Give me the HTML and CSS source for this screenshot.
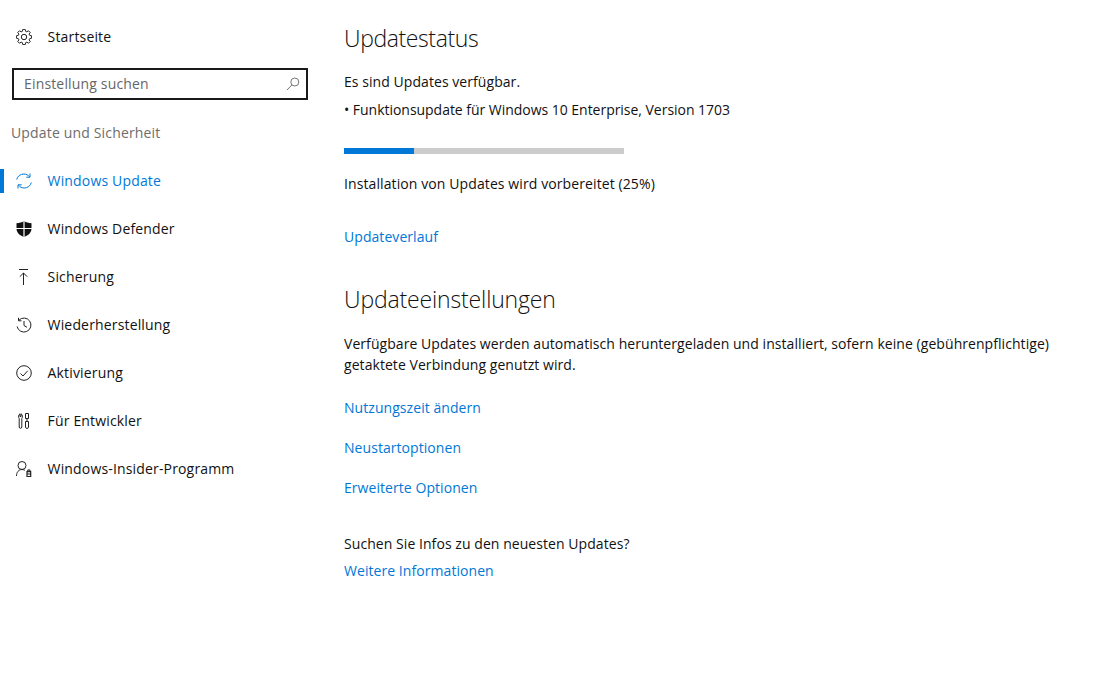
FILE: index.html
```html
<!DOCTYPE html>
<html lang="de">
<head>
    <meta charset="UTF-8">
    <meta name="viewport" content="width=device-width, initial-scale=1.0">
    <title>Windows Update</title>
    <link rel="stylesheet" href="styles.css">
</head>
<body>

    <div class="sidebar">
        <a class="nav-item home-item">
            <svg class="nav-icon" viewBox="0 0 16 16" fill="none" stroke="#222" stroke-width="1"><polygon points="13.67,6.37 15.61,6.8 15.61,9.2 13.67,9.63 13.16,10.86 14.23,12.53 12.53,14.23 10.86,13.16 9.63,13.67 9.2,15.61 6.8,15.61 6.37,13.67 5.14,13.16 3.47,14.23 1.77,12.53 2.84,10.86 2.33,9.63 .39,9.2 .39,6.8 2.33,6.37 2.84,5.14 1.77,3.47 3.47,1.77 5.14,2.84 6.37,2.33 6.8,.39 9.2,.39 9.63,2.33 10.86,2.84 12.53,1.77 14.23,3.47 13.16,5.14"/><circle cx="8" cy="8" r="2.700"/></svg>
            <span>Startseite</span>
        </a>

        <div class="search-box">
            <span class="search-text">Einstellung suchen</span>
            <svg class="search-icon" viewBox="0 0 14 14" fill="none" stroke="#767676" stroke-width="1"><circle cx="8.800" cy="5" r="4"/><path d="M5.900 7.900 1 13"/></svg>
        </div>

        <div class="section-title">Update und Sicherheit</div>

        <a class="nav-item active">
            <svg class="nav-icon" viewBox="0 0 16 16" fill="none" stroke="#0078d7" stroke-width="1"><path d="M.7 6.500C1.400 3.300 4.300 1 7.800 1c2.300 0 4.400 1 5.700 2.800M14 .5v3.700h-3.700"/><path d="M15.300 9.500c-.7 3.200-3.600 5.500-7.100 5.500-2.300 0-4.400-1-5.700-2.800M2 15.500v-3.700h3.700"/></svg>
            <span>Windows Update</span>
        </a>
        <a class="nav-item">
            <svg class="nav-icon" viewBox="0 0 16 16"><path fill="#111" d="M8 0c2 1.400 4.500 2.200 7.500 2.200v5.300C15.500 11.500 12.500 14.500 8 16 3.500 14.500.5 11.500.5 7.500V2.200C3.500 2.200 6 1.400 8 0z"/><path stroke="#fff" stroke-width="1.200" d="M8 0v16M0 7.500h16"/></svg>
            <span>Windows Defender</span>
        </a>
        <a class="nav-item">
            <svg class="nav-icon" viewBox="0 0 16 16" fill="none" stroke="#222" stroke-width="1"><path d="M3 .5h9M7.500 16V4M3.800 7.700 7.500 4l3.700 3.700"/></svg>
            <span>Sicherung</span>
        </a>
        <a class="nav-item">
            <svg class="nav-icon" viewBox="0 0 16 16" fill="none" stroke="#222" stroke-width="1"><path d="M2.900 3.200A7 7 0 1 1 1.100 9.500M2.500 .8v3h3M8 4v4.500l3 1.800"/></svg>
            <span>Wiederherstellung</span>
        </a>
        <a class="nav-item">
            <svg class="nav-icon" viewBox="0 0 16 16" fill="none" stroke="#222" stroke-width="1"><circle cx="8" cy="8" r="7.300"/><path d="M4.500 8.500 7 11l4.700-5.200"/></svg>
            <span>Aktivierung</span>
        </a>
        <a class="nav-item">
            <svg class="nav-icon" viewBox="0 0 16 16" fill="none" stroke="#222" stroke-width="1"><path d="M4 .8v2.700h1V.8C6.700 1.500 6.700 4.500 5.800 5.500v8.500c0 1.800-2.600 1.800-2.600 0V5.500C2.300 4.500 2.300 1.500 4 .8zM9.500 .5h3v5h-3zM11 5.500v3M9.500 8.500h3v5.700c0 1.600-3 1.600-3 0z"/></svg>
            <span>Für Entwickler</span>
        </a>
        <a class="nav-item">
            <svg class="nav-icon" viewBox="0 0 16 16" fill="none" stroke="#222" stroke-width="1"><circle cx="6" cy="4.500" r="4"/><path d="M.5 15c0-3.800 2.200-6.500 5.500-6.500 1 0 2 .3 2.800.8"/><path stroke-width="1.200" d="M11.700 10.500v-.7c0-1.400 2.300-1.400 2.300 0v.7M11 10.700h3.700v4.800H11zM11 13h3.700"/></svg>
            <span>Windows-Insider-Programm</span>
        </a>
    </div>

    <div class="content">
        <h2 class="first-heading">Updatestatus</h2>
        <p class="status-line">Es sind Updates verfügbar.</p>
        <p class="update-line">• Funktionsupdate für Windows 10 Enterprise, Version 1703</p>

        <div class="progress">
            <div class="progress-fill" style="width: 25%"></div>
        </div>

        <p class="progress-text">Installation von Updates wird vorbereitet (25%)</p>
        <a class="link history-link">Updateverlauf</a>

        <h2 class="second-heading">Updateeinstellungen</h2>
        <p class="description">Verfügbare Updates werden automatisch heruntergeladen und installiert, sofern keine (gebührenpflichtige) getaktete Verbindung genutzt wird.</p>

        <a class="link option-link">Nutzungszeit ändern</a>
        <a class="link option-link">Neustartoptionen</a>
        <a class="link option-link">Erweiterte Optionen</a>

        <p class="info-text">Suchen Sie Infos zu den neuesten Updates?</p>
        <a class="link info-link">Weitere Informationen</a>
    </div>

</body>
</html>
```

FILE: styles.css
```css
body {
    font-family: "Open Sans", "Noto Sans", sans-serif;
    font-size: 14px;
    line-height: 20px;
    letter-spacing: 0.06px;
    color: #111;
    background-color: #fff;
    display: flex;
    margin: 0;
}

.sidebar {
    width: 320px;
    flex-shrink: 0;
    padding-top: 13px;
    letter-spacing: 0.16px;
}

.nav-item {
    display: flex;
    align-items: center;
    gap: 15.6px;
    height: 48px;
    padding-left: 16px;
}

.nav-icon {
    width: 16px;
    height: 16px;
    flex-shrink: 0;
}

.nav-item.active {
    color: #0078d7;
    position: relative;
}

.nav-item.active::before {
    content: "";
    position: absolute;
    left: 0;
    top: 12px;
    width: 4px;
    height: 24px;
    background-color: #0078d7;
}

.home-item {
    margin-bottom: 7px;
}

.search-box {
    display: flex;
    align-items: center;
    justify-content: space-between;
    box-sizing: border-box;
    width: 296px;
    height: 32px;
    margin-left: 12px;
    padding: 0 6px 0 10px;
    border: 2px solid #1a1a1a;
}

.search-text {
    color: #666;
}

.search-icon {
    width: 14px;
    height: 14px;
}

.section-title {
    margin: 23px 0 0 11px;
    height: 34px;
    color: #6d6d6d;
}

.content {
    width: 720px;
    padding-left: 24px;
}

h2 {
    font-size: 23px;
    font-weight: 300;
    line-height: 32px;
    letter-spacing: -0.4px;
    margin: 0;
}

p {
    margin: 0;
}

.link {
    display: block;
    color: #0078d7;
}

.first-heading {
    margin-top: 22px;
}

.status-line {
    margin-top: 18px;
}

.update-line {
    margin-top: 8px;
    letter-spacing: -0.03px;
}

.progress {
    width: 280px;
    height: 6px;
    margin-top: 28px;
    background-color: #ccc;
}

.progress-fill {
    height: 100%;
    background-color: #0078d7;
}

.progress-text {
    margin-top: 20px;
    letter-spacing: 0.1px;
}

.history-link {
    margin-top: 33px;
}

.second-heading {
    margin-top: 36px;
    letter-spacing: -0.15px;
}

.description {
    margin-top: 19px;
    margin-bottom: 23px;
    line-height: 20.5px;
}

.option-link {
    margin-top: 20px;
}

.info-text {
    margin-top: 36px;
}

.info-link {
    margin-top: 7px;
}
```
